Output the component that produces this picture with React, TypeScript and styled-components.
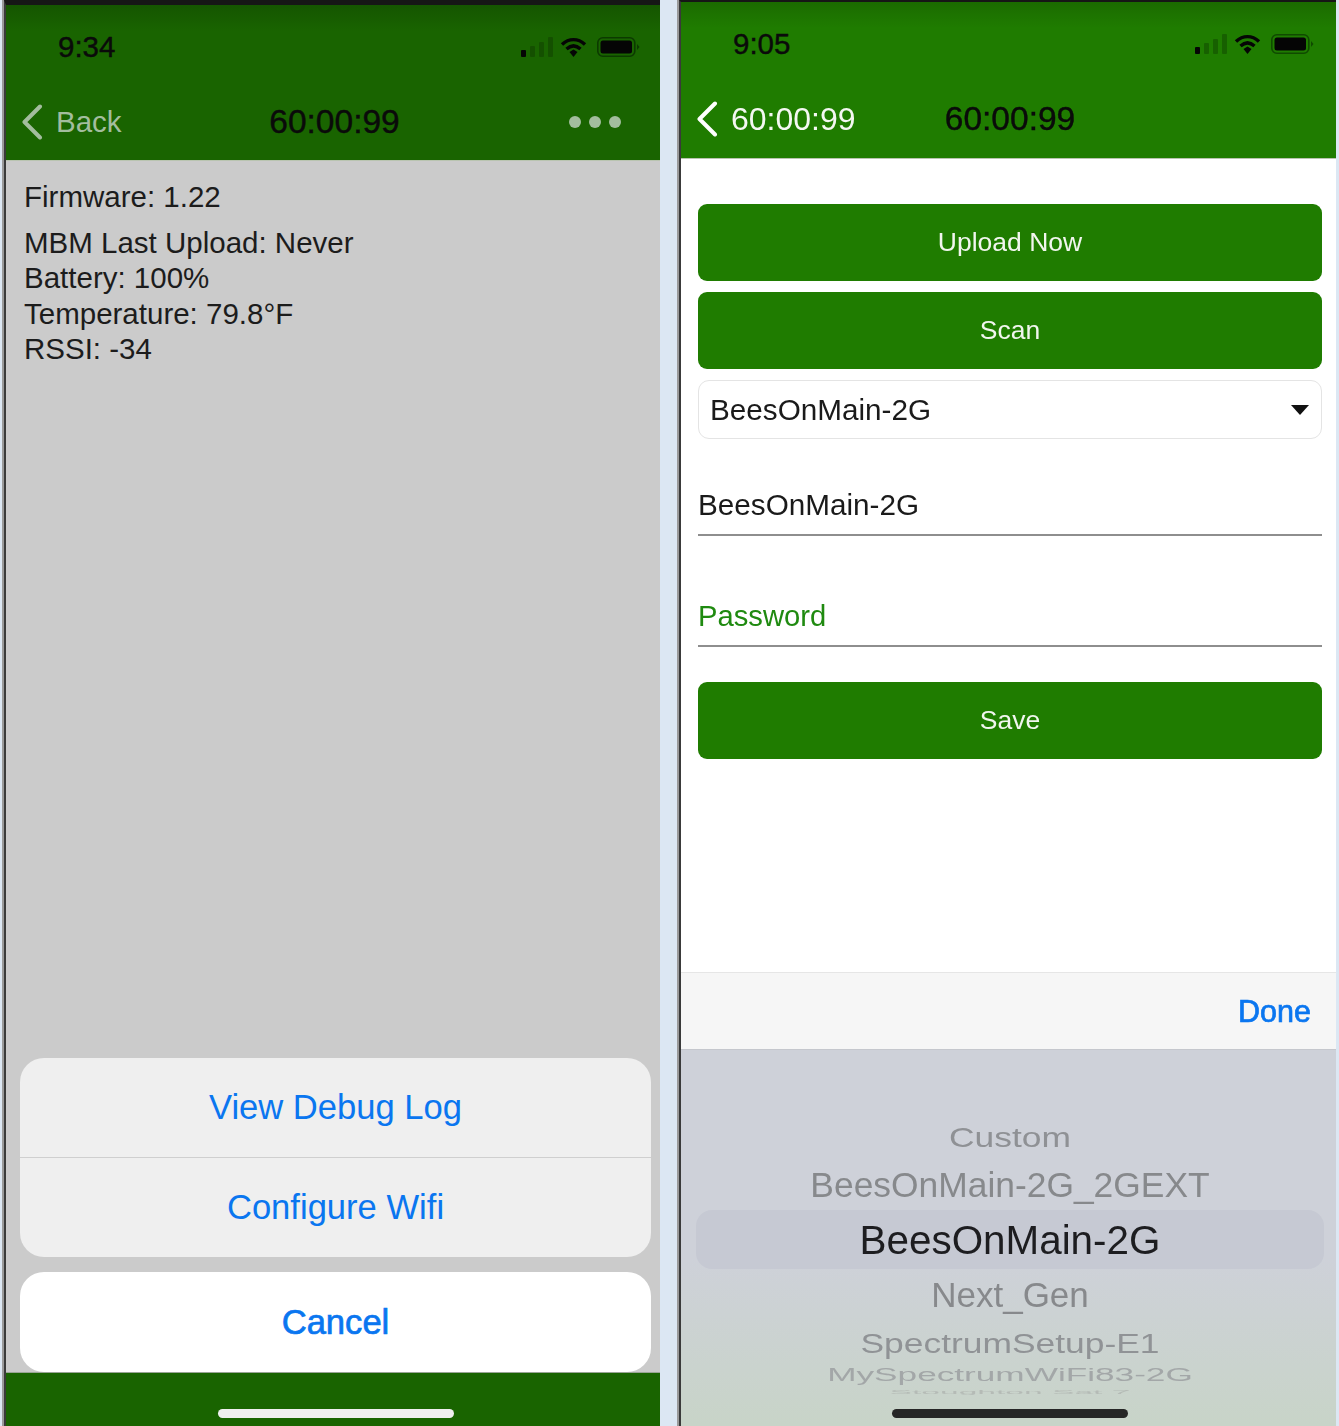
import React, { FC } from "react";
import styled, { createGlobalStyle } from "styled-components";

const GlobalStyle = createGlobalStyle`
  html, body {
    margin: 0;
    padding: 0;
    background: #dce7f3;
  }
  body {
    font-family: "Liberation Sans", Arial, sans-serif;
    overflow: hidden;
  }
`;

const Page = styled.div`
  display: flex;
  width: 1339px;
  height: 1426px;
  overflow: hidden;
  filter: blur(0.45px);
`;

const Phone = styled.div<{ $width: number; $top: number; $left: number }>`
  width: ${({ $width }) => $width}px;
  height: 1426px;
  margin-left: ${({ $left }) => $left}px;
  box-sizing: border-box;
  position: relative;
  display: flex;
  flex-direction: column;
  flex-shrink: 0;
  border-top: ${({ $top }) => $top}px solid #161616;
  border-left: 2px solid #3a3a3a;
  box-shadow: -2px 0 0 #9a9a9a;
`;

const Header = styled.div<{ $bg: string; $edge: string; $height: number }>`
  height: ${({ $height }) => $height}px;
  flex-shrink: 0;
  display: flex;
  flex-direction: column;
  background: linear-gradient(${({ $edge }) => $edge}, ${({ $bg }) => $bg} 26px);
  border-bottom: 1px solid #b9c4b0;
  box-sizing: border-box;
`;

const StatusBar = styled.div<{ $right: number }>`
  height: 78px;
  display: flex;
  align-items: center;
  justify-content: space-between;
  padding: 8px ${({ $right }) => $right}px 3px 52px;
  box-sizing: border-box;
`;

const Clock = styled.span`
  font-size: 29.5px;
  line-height: 32px;
  color: #0a0a0a;
  -webkit-text-stroke: 0.4px #0a0a0a;
`;

const StatusIcons = styled.div`
  display: flex;
  align-items: center;
  gap: 7px;
`;

const NavBar = styled.div`
  flex: 1;
  display: grid;
  grid-template-columns: 1fr auto 1fr;
  align-items: center;
  padding: 0 12px 0 15px;
`;

const NavLeft = styled.div<{ $color: string; $size: number }>`
  display: flex;
  align-items: center;
  gap: 13px;
  color: ${({ $color }) => $color};
  font-size: ${({ $size }) => $size}px;
`;

const NavTitle = styled.div`
  font-size: 33.5px;
  color: #0a0a0a;
  -webkit-text-stroke: 0.4px #0a0a0a;
`;

const Dots = styled.div`
  display: flex;
  justify-content: flex-end;
  gap: 8px;
  margin-right: 27px;
`;

const Dot = styled.span`
  width: 12px;
  height: 12px;
  border-radius: 50%;
  background: #a3bd9e;
`;

const GrayBody = styled.div`
  flex: 1;
  background: #cbcbcb;
  display: flex;
  flex-direction: column;
  padding: 18px 9px 0 14px;
`;

const InfoLine = styled.div<{ $gap?: number }>`
  font-size: 29.5px;
  line-height: 35.5px;
  color: #1c1c1c;
  margin-bottom: ${({ $gap }) => $gap ?? 0}px;
  margin-left: 4px;
`;

const Sheet = styled.div`
  margin-top: auto;
  display: flex;
  flex-direction: column;
  gap: 15px;
`;

const SheetGroup = styled.div<{ $bg: string }>`
  background: ${({ $bg }) => $bg};
  border-radius: 24px;
  overflow: hidden;
`;

const SheetItem = styled.div<{ $bold?: boolean; $divider?: boolean; $height: number }>`
  height: ${({ $height }) => $height}px;
  display: flex;
  align-items: center;
  justify-content: center;
  font-size: 34.6px;
  color: #0a76f0;
  -webkit-text-stroke: ${({ $bold }) => ($bold ? "0.7px #0a76f0" : "0")};
  border-bottom: ${({ $divider }) => ($divider ? "1px solid #cfcfcf" : "0")};
  box-sizing: ${({ $divider }) => ($divider ? "content-box" : "border-box")};
`;

const Footer = styled.div`
  height: 54px;
  flex-shrink: 0;
  background: #196400;
  border-top: 1px solid #9aa596;
  box-sizing: border-box;
`;

const HomeBar = styled.div<{ $color: string; $shift: number }>`
  position: absolute;
  left: 50%;
  bottom: 8px;
  width: 236px;
  height: 9px;
  margin-left: ${({ $shift }) => $shift - 118}px;
  border-radius: 5px;
  background: ${({ $color }) => $color};
`;

const FormBody = styled.div`
  flex: 1;
  background: #fff;
  display: flex;
  flex-direction: column;
  padding: 45px 14px 0 17px;
`;

const GreenButton = styled.div<{ $mb: number }>`
  height: 77px;
  flex-shrink: 0;
  margin-bottom: ${({ $mb }) => $mb}px;
  border-radius: 9px;
  background: #1f7c00;
  color: #f1f6ee;
  font-size: 26.5px;
  display: flex;
  align-items: center;
  justify-content: center;
`;

const SelectBox = styled.div`
  height: 59px;
  box-sizing: border-box;
  flex-shrink: 0;
  border: 1px solid #e4e4e4;
  border-radius: 11px;
  padding: 0 12px 0 11px;
  font-size: 29.7px;
  color: #1a1a1a;
  display: flex;
  align-items: center;
  justify-content: space-between;
`;

const Caret = styled.span`
  width: 0;
  height: 0;
  border-left: 9px solid transparent;
  border-right: 9px solid transparent;
  border-top: 10px solid #111;
`;

const FieldRow = styled.div<{ $color: string; $height: number; $mb: number; $size: number }>`
  height: ${({ $height }) => $height}px;
  margin-bottom: ${({ $mb }) => $mb}px;
  box-sizing: border-box;
  flex-shrink: 0;
  border-bottom: 2px solid #8e8e8e;
  display: flex;
  align-items: flex-end;
  padding: 0 0 11px 0;
  font-size: ${({ $size }) => $size}px;
  line-height: 36px;
  color: ${({ $color }) => $color};
`;

const Toolbar = styled.div`
  height: 78px;
  flex-shrink: 0;
  box-sizing: border-box;
  background: #f6f6f6;
  border-top: 1px solid #e6e6e6;
  border-bottom: 1px solid #c5c7cd;
  display: flex;
  align-items: center;
  justify-content: flex-end;
  padding: 0 25px 0 0;
  font-size: 30.5px;
  color: #0a76f0;
  -webkit-text-stroke: 0.7px #0a76f0;
`;

const Picker = styled.div`
  height: 376px;
  flex-shrink: 0;
  box-sizing: border-box;
  padding: 68px 12px 0 15px;
  background: linear-gradient(#ced1d9 0, #ced1d9 55%, #c8d4c8 100%);
  display: flex;
  flex-direction: column;
`;

const PickerRow = styled.div<{
  $height: number;
  $size: number;
  $scale: number;
  $color: string;
  $nudge: number;
  $selected?: boolean;
}>`
  height: ${({ $height }) => $height}px;
  box-sizing: border-box;
  padding-top: ${({ $nudge }) => $nudge}px;
  flex-shrink: 0;
  display: flex;
  align-items: center;
  justify-content: center;
  border-radius: 16px;
  background: ${({ $selected }) => ($selected ? "#c6c9d3" : "transparent")};
  color: ${({ $color }) => $color};
  font-size: ${({ $size }) => $size}px;
  overflow: hidden;

  span {
    display: block;
    white-space: nowrap;
    transform: scaleY(${({ $scale }) => $scale});
  }
`;

const pickerRows = [
  { label: "Custom", height: 37, size: 35.4, scale: 0.8, color: "#8f9195", nudge: 2 },
  { label: "BeesOnMain-2G_2GEXT", height: 55, size: 35.4, scale: 0.98, color: "#87898c", nudge: 5 },
  { label: "BeesOnMain-2G", height: 59, size: 40.4, scale: 1, color: "#1d1d20", selected: true, nudge: 1 },
  { label: "Next_Gen", height: 52, size: 35, scale: 1, color: "#87898c", nudge: 0 },
  { label: "SpectrumSetup-E1", height: 41, size: 35.4, scale: 0.8, color: "#909396", nudge: 3 },
  { label: "MySpectrumWiFi83-2G", height: 25, size: 35.2, scale: 0.5, color: "#a3a7a8", nudge: 1 },
  { label: "Stoughton Sat 7", height: 10, size: 33.6, scale: 0.16, color: "#b5bbb6", nudge: 0 },
];

// signal bars, wifi and battery share one drawing, only the tint differs
const StatusGlyphs: FC<{ $dim: string; $line: string }> = ({ $dim, $line }) => (
  <StatusIcons>
    <svg width="32" height="20" viewBox="0 0 32 20">
      <rect x="0" y="13" width="5" height="7" rx="1" fill="#050505" />
      <rect x="9" y="9" width="5" height="11" rx="1" fill={$dim} />
      <rect x="18" y="5" width="5" height="15" rx="1" fill={$dim} />
      <rect x="27" y="0" width="5" height="20" rx="1" fill={$dim} />
    </svg>
    <svg width="27" height="20" viewBox="0 0 27 20">
      <path d="M2 7.5C9 1 18 1 25 7.5" fill="none" stroke="#050505" strokeWidth="3.4" />
      <path d="M6.5 12C11 8 16 8 20.5 12" fill="none" stroke="#050505" strokeWidth="3.4" />
      <path d="M9.5 15L13.5 12.5L17.5 15L13.5 20Z" fill="#050505" />
    </svg>
    <svg width="43" height="20" viewBox="0 0 43 20" style={{ marginLeft: 3 }}>
      <rect x="0.8" y="0.8" width="37" height="18.4" rx="5" fill="none" stroke={$line} strokeWidth="1.6" />
      <rect x="3.5" y="3.5" width="31.5" height="13" rx="2.5" fill="#050505" />
      <path d="M40 7L42.5 10L40 13Z" fill={$line} />
    </svg>
  </StatusIcons>
);

const BackChevron: FC<{ color: string }> = ({ color }) => (
  <svg width="22" height="36" viewBox="0 0 22 36">
    <path d="M19 2.5L3.5 18L19 33.5" fill="none" stroke={color} strokeWidth="4" strokeLinecap="round" strokeLinejoin="round" />
  </svg>
);

const App: FC = () => {
  return (
    <>
      <GlobalStyle />
      <Page>
        <Phone $width={656} $top={5} $left={4}>
          <Header $bg="#196400" $edge="#155500" $height={156}>
            <StatusBar $right={20}>
              <Clock>9:34</Clock>
              <StatusGlyphs $dim="#145000" $line="#0c3a00" />
            </StatusBar>
            <NavBar>
              <NavLeft $color="#a3bd9e" $size={29.5}>
                <BackChevron color="#a3bd9e" />
                Back
              </NavLeft>
              <NavTitle>60:00:99</NavTitle>
              <Dots>
                <Dot />
                <Dot />
                <Dot />
              </Dots>
            </NavBar>
          </Header>
          <GrayBody>
            <InfoLine $gap={10}>Firmware: 1.22</InfoLine>
            <InfoLine>MBM Last Upload: Never</InfoLine>
            <InfoLine>Battery: 100%</InfoLine>
            <InfoLine>Temperature: 79.8°F</InfoLine>
            <InfoLine>RSSI: -34</InfoLine>
            <Sheet>
              <SheetGroup $bg="#efefef">
                <SheetItem $divider $height={99}>View Debug Log</SheetItem>
                <SheetItem $height={99}>Configure Wifi</SheetItem>
              </SheetGroup>
              <SheetGroup $bg="#ffffff">
                <SheetItem $bold $height={100}>Cancel</SheetItem>
              </SheetGroup>
            </Sheet>
          </GrayBody>
          <Footer />
          <HomeBar $color="#efefef" $shift={3} />
        </Phone>
        <Phone $width={657} $top={2} $left={19}>
          <Header $bg="#1f7c00" $edge="#1b6b00" $height={157}>
            <StatusBar $right={22}>
              <Clock>9:05</Clock>
              <StatusGlyphs $dim="#176000" $line="#104a00" />
            </StatusBar>
            <NavBar>
              <NavLeft $color="#f4f8f2" $size={32}>
                <BackChevron color="#ffffff" />
                60:00:99
              </NavLeft>
              <NavTitle>60:00:99</NavTitle>
              <span />
            </NavBar>
          </Header>
          <FormBody>
            <GreenButton $mb={11}>Upload Now</GreenButton>
            <GreenButton $mb={11}>Scan</GreenButton>
            <SelectBox>
              BeesOnMain-2G
              <Caret />
            </SelectBox>
            <FieldRow $color="#1a1a1a" $height={97} $mb={0} $size={29.7}>BeesOnMain-2G</FieldRow>
            <FieldRow $color="#1f8a10" $height={111} $mb={35} $size={29.2}>Password</FieldRow>
            <GreenButton $mb={0}>Save</GreenButton>
          </FormBody>
          <Toolbar>Done</Toolbar>
          <Picker>
            {pickerRows.map((row) => (
              <PickerRow
                key={row.label}
                $height={row.height}
                $size={row.size}
                $scale={row.scale}
                $color={row.color}
                $nudge={row.nudge}
                $selected={row.selected}
              >
                <span>{row.label}</span>
              </PickerRow>
            ))}
          </Picker>
          <HomeBar $color="#262626" $shift={1} />
        </Phone>
      </Page>
    </>
  );
};

export default App;
